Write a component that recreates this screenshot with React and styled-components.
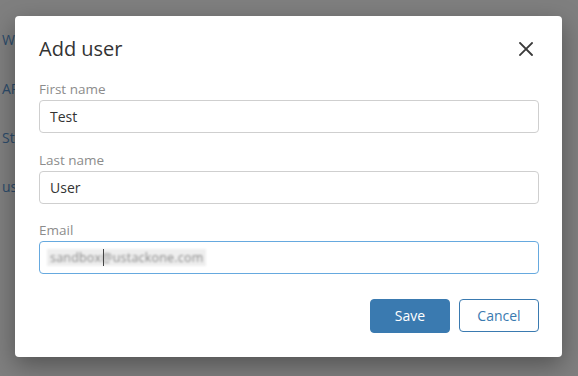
import React from "react";
import styled, { createGlobalStyle } from "styled-components";

const Global = createGlobalStyle`
  html, body { margin: 0; padding: 0; background: #fff; }
  body { font-family: "Open Sans", "Noto Sans", sans-serif; width: 578px; height: 376px; overflow: hidden; }
`;

const Page = styled.div`
  position: relative;
  width: 578px;
  height: 376px;
  background: #fff;
`;

const Sidebar = styled.nav`
  display: flex;
  flex-direction: column;
  gap: 29px;
  width: 13px;
  overflow: hidden;
  white-space: nowrap;
  padding: 30px 0 0 2px;
`;

const NavLink = styled.a`
  font-size: 14px;
  line-height: 20px;
  color: #5a97d4;
  text-decoration: none;
`;

const Overlay = styled.div`
  position: absolute;
  inset: 0;
  background: rgba(0, 0, 0, 0.5);
`;

const Modal = styled.div`
  position: absolute;
  left: 15px;
  top: 16px;
  width: 547px;
  box-sizing: border-box;
  padding: 19px 23px 24px 24px;
  background: #fff;
  border-radius: 4px;
  box-shadow: 0 8px 24px rgba(0, 0, 0, 0.35);
  display: flex;
  flex-direction: column;
`;

const Header = styled.div`
  display: flex;
  align-items: center;
  justify-content: space-between;
  height: 28px;
  margin-bottom: 16px;
`;

const Title = styled.h2`
  margin: 0;
  font-size: 20px;
  font-weight: 400;
  line-height: 28px;
  color: #333;
`;

const Close = styled.button`
  border: 0;
  background: none;
  padding: 0;
  margin-right: 5px;
  width: 16px;
  height: 16px;
  display: flex;
  align-items: center;
  justify-content: center;
  cursor: pointer;
`;

const Field = styled.div`
  display: flex;
  flex-direction: column;
  margin-bottom: 16.5px;
`;

const Label = styled.label`
  font-size: 13.5px;
  line-height: 20px;
  color: #8c8c8c;
  margin-bottom: 1px;
`;

const InputBox = styled.div`
  position: relative;
  height: 33px;
  box-sizing: border-box;
  border: 1px solid ${(p) => (p.$focused ? "#66a9df" : "#cfcfcf")};
  border-radius: 4px;
  padding: 0 10px;
  display: flex;
  align-items: center;
  font-size: 14px;
  color: #333;
`;

const Blurred = styled.span`
  background: #eeeeee;
  color: #8a8a8a;
  filter: blur(0.8px);
  font-size: 12.5px;
  letter-spacing: 0.2px;
  padding: 0 3px;
  margin-left: -3px;
`;

const Caret = styled.span`
  position: absolute;
  left: 63px;
  top: 7px;
  width: 1px;
  height: 17px;
  background: #444;
`;

const Footer = styled.div`
  display: flex;
  justify-content: flex-end;
  align-items: center;
  gap: 9px;
  margin-top: 8px;
`;

const Button = styled.button`
  width: 80px;
  height: ${(p) => (p.$primary ? "34px" : "33px")};
  box-sizing: border-box;
  border-radius: 4px;
  font-family: inherit;
  font-size: 14px;
  cursor: pointer;
  border: 1px solid #3a7ab0;
  background: ${(p) => (p.$primary ? "#3a7ab0" : "#fff")};
  color: ${(p) => (p.$primary ? "#fff" : "#3a7ab0")};
`;

export default function App() {
  return (
    <Page>
      <Global />
      <Sidebar>
        <NavLink>Wa</NavLink>
        <NavLink>AP</NavLink>
        <NavLink>St</NavLink>
        <NavLink>us</NavLink>
      </Sidebar>
      <Overlay />
      <Modal>
        <Header>
          <Title>Add user</Title>
          <Close aria-label="Close">
            <svg width="14" height="14" viewBox="0 0 14 14">
              <path d="M1 1L13 13M13 1L1 13" stroke="#3a3a3a" strokeWidth="1.8" strokeLinecap="square" />
            </svg>
          </Close>
        </Header>
        <Field>
          <Label>First name</Label>
          <InputBox>Test</InputBox>
        </Field>
        <Field>
          <Label>Last name</Label>
          <InputBox>User</InputBox>
        </Field>
        <Field>
          <Label>Email</Label>
          <InputBox $focused>
            <Blurred>sandbox@ustackone.com</Blurred>
            <Caret />
          </InputBox>
        </Field>
        <Footer>
          <Button $primary>Save</Button>
          <Button>Cancel</Button>
        </Footer>
      </Modal>
    </Page>
  );
}
